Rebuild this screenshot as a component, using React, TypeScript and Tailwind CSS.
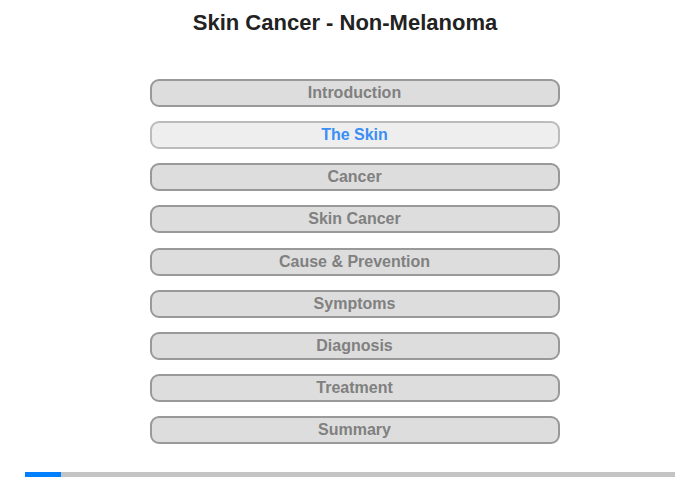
const sections = [
  "Introduction",
  "The Skin",
  "Cancer",
  "Skin Cancer",
  "Cause & Prevention",
  "Symptoms",
  "Diagnosis",
  "Treatment",
  "Summary",
]

export default function App() {
  const active = 1

  return (
    <div className="h-[480px] w-[700px] bg-white" style={{ fontFamily: '"Liberation Sans", Arial, sans-serif' }}>
      <h1 className="pt-[10px] pr-[10px] text-center text-[22px] leading-[26px] font-bold text-[#222]">
        Skin Cancer - Non-Melanoma
      </h1>

      <div className="mt-[43px] flex flex-col items-center gap-[14.125px] pl-[9px]">
        {sections.map((s, i) =>
          i === active ? (
            <button
              key={s}
              className="h-[28px] w-[410px] rounded-[9px] border-2 border-[#bcbcbc] bg-[#eeeeee] text-[16px] leading-none font-bold text-[#3a8ef5]"
            >
              {s}
            </button>
          ) : (
            <button
              key={s}
              className="h-[28px] w-[410px] rounded-[9px] border-2 border-[#999999] bg-[#dddddd] text-[16px] leading-none font-bold text-[#808080]"
            >
              {s}
            </button>
          )
        )}
      </div>

      <div className="mx-[25px] mt-[28px] flex h-[5px] bg-[#c4c4c4]">
        <div className="w-[36px] bg-[#0080ff]" />
      </div>
    </div>
  )
}
